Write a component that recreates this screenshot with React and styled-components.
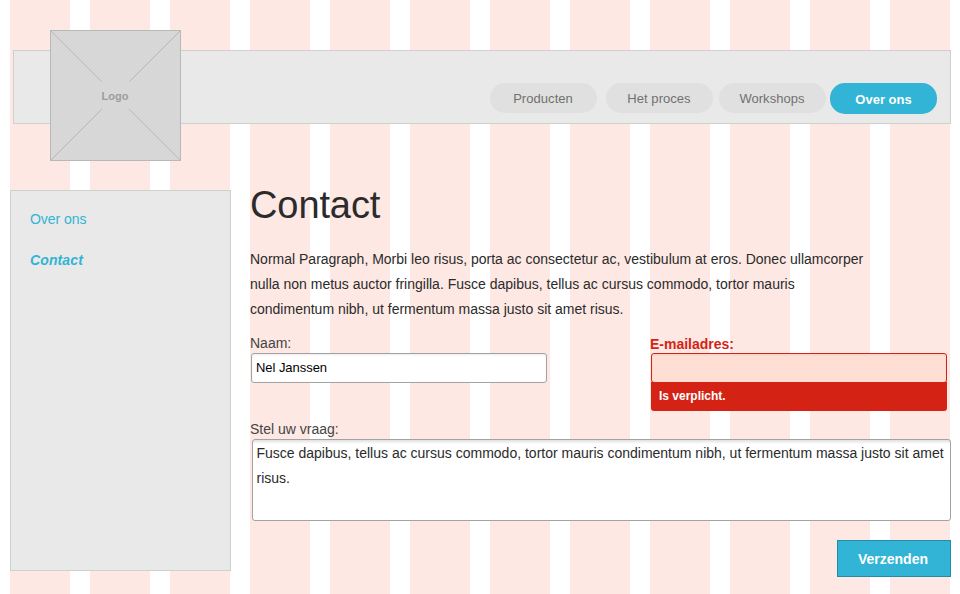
import React from "react";
import styled, { createGlobalStyle, css } from "styled-components";

const GlobalStyle = createGlobalStyle`
  * { box-sizing: border-box; }
  body {
    margin: 0;
    background: #fff;
    font-family: "Liberation Sans", Arial, sans-serif;
  }
`;

const Page = styled.div`
  width: 960px;
  height: 594px;
  padding-top: 50px;
  overflow: hidden;
  color: #2b2b2b;
  font-size: 14px;
  background: repeating-linear-gradient(90deg, #fee8e3 0 60px, #fff 60px 80px) 10px 0 / 940px 100% no-repeat;
`;

const Header = styled.header`
  display: flex;
  align-items: flex-start;
  justify-content: space-between;
  width: 938px;
  height: 74px;
  margin-left: 13px;
  padding: 0 13px 0 36px;
  background: #e9e9e9;
  border: 1px solid #cfcfcf;
`;

const Logo = styled.svg`
  flex: none;
  width: 131px;
  height: 131px;
  margin-top: -21px;
`;

const Nav = styled.nav`
  display: flex;
  padding-top: 32px;
`;

const NavItem = styled.a`
  width: 107px;
  height: 30px;
  margin-left: ${(p) => p.$gap}px;
  padding-right: 1px;
  border-radius: 15px;
  background: #e0e0e0;
  color: #717171;
  font-size: 13px;
  line-height: 31px;
  letter-spacing: 0.05px;
  text-align: center;
  ${(p) =>
    p.$active &&
    css`
      height: 30.5px;
      padding-right: 0;
      background: #31b4d5;
      color: #fff;
      font-weight: bold;
      line-height: 33px;
      letter-spacing: 0;
    `}
`;

const Body = styled.div`
  display: flex;
  gap: 19px;
  padding: 66px 9px 0 10px;
`;

const Sidebar = styled.aside`
  display: flex;
  flex-direction: column;
  gap: 25px;
  flex: none;
  width: 221px;
  height: 381px;
  padding: 20px 19px;
  background: #e9e9e9;
  border: 1px solid #cfcfcf;
`;

const SideLink = styled.a`
  color: #31b4d5;
  line-height: 16px;
  letter-spacing: -0.05px;
  ${(p) =>
    p.$current &&
    css`
      font-weight: bold;
      font-style: italic;
      letter-spacing: 0.12px;
    `}
`;

const Content = styled.main`
  width: 701px;
`;

const Title = styled.h1`
  margin: 0;
  height: 57px;
  font-size: 38px;
  font-weight: normal;
  line-height: 31px;
  letter-spacing: -0.1px;
`;

const Intro = styled.p`
  margin: 0;
  height: 75px;
  line-height: 25px;
  white-space: nowrap;
`;

const Line = styled.span`
  display: block;
`;

const FieldRow = styled.div`
  display: flex;
  justify-content: space-between;
  height: 99px;
  padding-top: 13px;
`;

const Field = styled.div`
  display: flex;
  flex-direction: column;
  width: ${(p) => (p.$wide ? "701px" : "297px")};
  margin-right: ${(p) => (p.$inset ? 4 : 0)}px;
`;

const Label = styled.label`
  height: 18px;
  line-height: ${(p) => (p.$invalid ? 19 : 17)}px;
  color: ${(p) => (p.$invalid ? "#d42315" : "#444")};
  font-weight: ${(p) => (p.$invalid ? "bold" : "normal")};
`;

const Input = styled.input`
  width: 296px;
  height: 30px;
  margin: 0 0 0 1px;
  padding: 0 4px 2px;
  border: 1px solid ${(p) => (p.$invalid ? "#d42315" : "#a4a2a2")};
  border-radius: 3px;
  outline: none;
  background: ${(p) => (p.$invalid ? "#ffdfd4" : "#fff")};
  box-shadow: inset 0 1px 2px rgba(0, 0, 0, 0.08);
  color: #000;
  font: 13px "Liberation Sans", Arial, sans-serif;
  letter-spacing: -0.05px;
`;

const ErrorText = styled.div`
  width: 296px;
  height: 29px;
  margin: -1px 0 0 1px;
  padding-left: 8px;
  border-radius: 0 0 3px 3px;
  background: #d42315;
  color: #fff;
  font-size: 12px;
  font-weight: bold;
  line-height: 29px;
`;

const Question = styled.div`
  width: 699px;
  height: 82px;
  margin-left: 2px;
  padding: 1px 0 0 3.5px;
  border: 1px solid #a4a2a2;
  border-radius: 3px;
  background: linear-gradient(#e0e0e0, #fff 4px);
  line-height: 25px;
  white-space: nowrap;
`;

const Submit = styled.button`
  display: block;
  width: 114px;
  height: 37px;
  margin: 19px 0 0 auto;
  padding: 1px 2px 0 0;
  border: 1px solid #238ba6;
  background: #31b4d5;
  color: #fff;
  font: bold 14px "Liberation Sans", Arial, sans-serif;
`;

export default function App() {
  return (
    <>
      <GlobalStyle />
      <Page>
        <Header>
          <Logo viewBox="0 0 131 131">
            <rect x="0.5" y="0.5" width="130" height="130" fill="#d7d7d7" stroke="#b8b8b8" />
            <path d="M1 1 51.5 51.5M130 1 79.5 51.5M1 130 52 79M130 130 79 79" stroke="#b8b8b8" />
            <text x="65" y="70" textAnchor="middle" fontSize="11" fontWeight="bold" fill="#9d9d9d">
              Logo
            </text>
          </Logo>
          <Nav>
            <NavItem $gap={0}>Producten</NavItem>
            <NavItem $gap={9}>Het proces</NavItem>
            <NavItem $gap={6}>Workshops</NavItem>
            <NavItem $gap={4} $active>Over ons</NavItem>
          </Nav>
        </Header>
        <Body>
          <Sidebar>
            <SideLink>Over ons</SideLink>
            <SideLink $current>Contact</SideLink>
          </Sidebar>
          <Content>
            <Title>Contact</Title>
            <Intro>
              <Line>Normal Paragraph, Morbi leo risus, porta ac consectetur ac, vestibulum at eros. Donec ullamcorper </Line>
              <Line>nulla non metus auctor fringilla. Fusce dapibus, tellus ac cursus commodo, tortor mauris </Line>
              <Line>condimentum nibh, ut fermentum massa justo sit amet risus.</Line>
            </Intro>
            <FieldRow>
              <Field>
                <Label htmlFor="naam">Naam:</Label>
                <Input id="naam" defaultValue="Nel Janssen" />
              </Field>
              <Field $inset>
                <Label htmlFor="email" $invalid>E-mailadres:</Label>
                <Input id="email" $invalid />
                <ErrorText>Is verplicht.</ErrorText>
              </Field>
            </FieldRow>
            <Field $wide>
              <Label>Stel uw vraag:</Label>
              <Question>
                <Line>Fusce dapibus, tellus ac cursus commodo, tortor mauris condimentum nibh, ut fermentum massa justo sit amet </Line>
                <Line>risus.</Line>
              </Question>
            </Field>
            <Submit>Verzenden</Submit>
          </Content>
        </Body>
      </Page>
    </>
  );
}
